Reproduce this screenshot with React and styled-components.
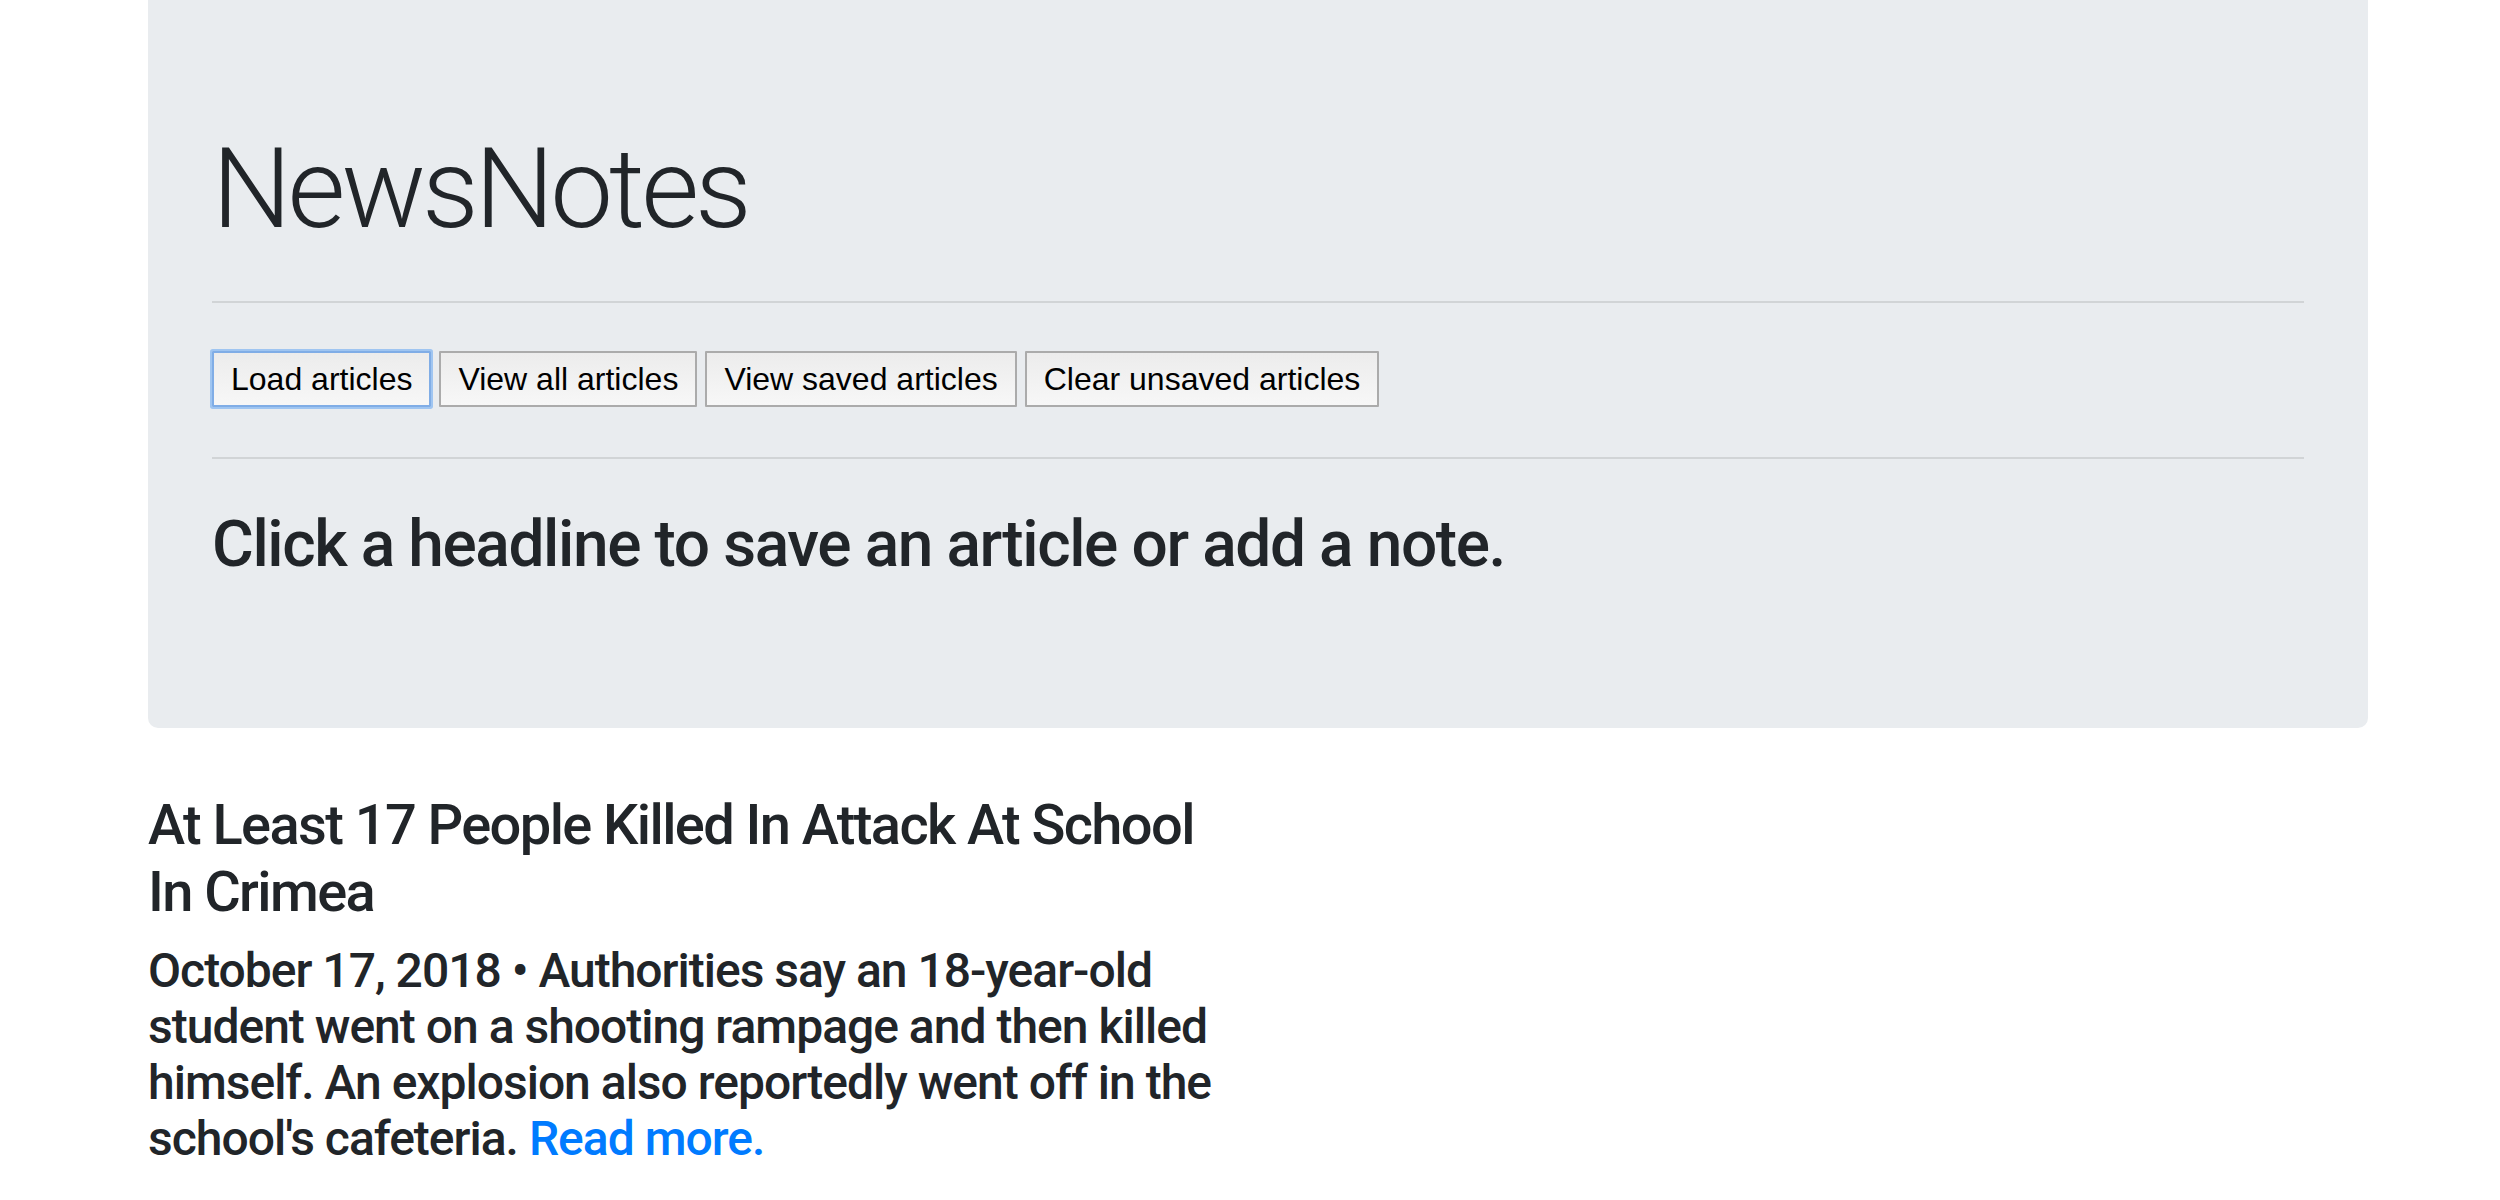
import styled, { createGlobalStyle } from "styled-components";

const GlobalStyle = createGlobalStyle`
  html, body {
    margin: 0;
    padding: 0;
    background: #fff;
  }
  body {
    font-family: Roboto, "Liberation Sans", Arial, sans-serif;
    color: #212529;
  }
`;

const buttons = [
  { label: "Load articles", focused: true },
  { label: "View all articles" },
  { label: "View saved articles" },
  { label: "Clear unsaved articles" },
];

const article = {
  title: "At Least 17 People Killed In Attack At School In Crimea",
  date: "October 17, 2018",
  summary:
    "Authorities say an 18-year-old student went on a shooting rampage and then killed himself. An explosion also reportedly went off in the school's cafeteria.",
};

const App = () => {
  return (
    <Page>
      <GlobalStyle />
      <Jumbotron>
        <Title>NewsNotes</Title>
        <Rule />
        <Toolbar>
          {buttons.map((b) => (
            <ActionButton key={b.label} $focused={b.focused}>
              {b.label}
            </ActionButton>
          ))}
        </Toolbar>
        <Rule />
        <Lead>Click a headline to save an article or add a note.</Lead>
      </Jumbotron>
      <ArticleList>
        <Article>
          <Headline>{article.title}</Headline>
          <Summary>
            {article.date} • {article.summary} <ReadMore href="#">Read more.</ReadMore>
          </Summary>
        </Article>
      </ArticleList>
    </Page>
  );
};

const Page = styled.div`
  width: 2220px;
  margin-left: 148px;
`;

const Jumbotron = styled.div`
  background: #e9ecef;
  border-radius: 0 0 10px 10px;
  padding: 122px 64px 128px;
  margin-bottom: 64px;
`;

const Title = styled.h1`
  margin: 0;
  font-family: Roboto, "Liberation Sans", sans-serif;
  font-size: 112px;
  line-height: 1.2;
  font-weight: 300;
  letter-spacing: -4px;
`;

const Rule = styled.hr`
  margin: 45px 0 48px;
  border: 0;
  border-top: 2px solid rgba(0, 0, 0, 0.1);
`;

const Toolbar = styled.div`
  display: flex;
  gap: 8px;
  padding: 0 0 5px;
`;

const ActionButton = styled.button`
  font-family: "Liberation Sans", Arial, sans-serif;
  font-size: 32px;
  line-height: 48px;
  color: #000;
  padding: 2px 17px;
  border: 2px solid ${(p) => (p.$focused ? "#80ade6" : "#ababab")};
  border-radius: 1px;
  background: linear-gradient(#ececec, #f7f7f7);
  box-shadow: ${(p) => (p.$focused ? "0 0 0 2px #9fc5f1" : "none")};
  cursor: pointer;
`;

const Lead = styled.h2`
  margin: 0 0 16px;
  font-size: 64px;
  line-height: 1.2;
  font-weight: 500;
  letter-spacing: -1.4px;
`;

const ArticleList = styled.div`
  display: flex;
  flex-direction: column;
`;

const Article = styled.div`
  width: 1080px;
`;

const Headline = styled.h3`
  margin: 0 0 16px;
  font-size: 56px;
  line-height: 1.2;
  font-weight: 500;
  letter-spacing: -1.6px;
`;

const Summary = styled.p`
  margin: 0;
  font-size: 48px;
  line-height: 56px;
  font-weight: 500;
  letter-spacing: -1px;
`;

const ReadMore = styled.a`
  color: #007bff;
  text-decoration: none;
`;

export default App;
